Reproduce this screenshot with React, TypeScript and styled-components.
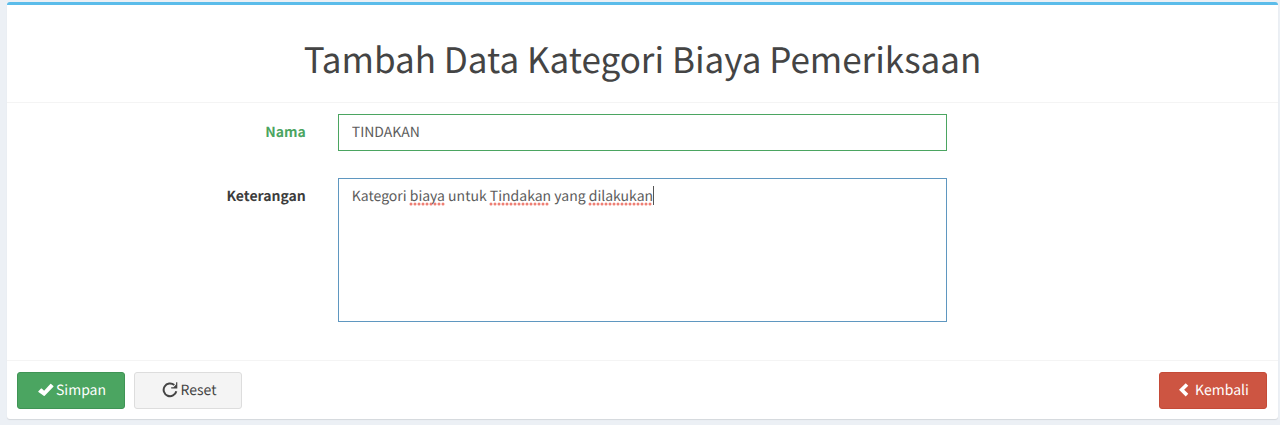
import React from "react";
import styled, { createGlobalStyle } from "styled-components";

const GlobalStyle = createGlobalStyle`
  *, *::before, *::after { box-sizing: border-box; }
  body {
    margin: 0;
    background: #ecf0f5;
    color: #444;
    font-family: "Source Sans Pro", "Noto Sans CJK SC", sans-serif;
    font-size: 14px;
    line-height: 20px;
    text-rendering: geometricPrecision;
  }
  button, input, textarea { font: inherit; text-rendering: inherit; }
`;

const Page = styled.main`
  padding: 2px 2px 6px 7px;
`;

const Card = styled.section`
  background: #fff;
  border-top: 3px solid #5bbcea;
  border-radius: 3px;
  box-shadow: 0 1px 1px rgba(0, 0, 0, 0.1);
`;

const CardHeader = styled.header`
  padding: 30px 12px 19px;
  border-bottom: 1px solid #f4f4f4;
  text-align: center;
`;

const Title = styled.h1`
  margin: 0;
  font-size: 35px;
  font-weight: 400;
  line-height: 48px;
`;

const Fields = styled.div`
  display: flex;
  flex-direction: column;
  gap: 27px;
  padding: 11px 0 38px;
`;

const FieldRow = styled.div`
  display: grid;
  grid-template-columns: 25% 50%;
`;

const Label = styled.label<{ $valid?: boolean }>`
  padding: 8px 19px 0 13px;
  text-align: right;
  font-weight: 700;
  color: ${(p) => (p.$valid ? "#4ba561" : "#3c3c3c")};
`;

const Control = styled.div`
  position: relative;
  display: flex;
  margin: 0 13px;
`;

const TextInput = styled.input`
  width: 100%;
  height: 37px;
  padding: 6px 13px 8px;
  border: 1px solid #4ba561;
  border-radius: 0;
  background: #fff;
  color: #5c5c5c;
  outline: none;
`;

const TextArea = styled.textarea`
  width: 100%;
  height: 144px;
  padding: 7px 13px;
  border: 1px solid #5f97c0;
  border-radius: 0;
  background: #fff;
  color: #5c5c5c;
  outline: none;
  resize: none;
`;

const SpellingMarks = styled.svg`
  position: absolute;
  top: 0;
  left: 0;
  pointer-events: none;
`;

const CardFooter = styled.footer`
  display: flex;
  justify-content: space-between;
  padding: 11px 11px 10px 10px;
  border-top: 1px solid #f4f4f4;
`;

const ButtonGroup = styled.div`
  display: flex;
  gap: 9px;
`;

const tones = {
  success: { background: "#4ba561", border: "#3f9455", text: "#fff" },
  neutral: { background: "#f4f4f4", border: "#ddd", text: "#444" },
  danger: { background: "#cd5542", border: "#c54a37", text: "#fff" },
};

const Button = styled.button<{ $tone: keyof typeof tones; $gap?: number }>`
  display: flex;
  align-items: center;
  justify-content: center;
  gap: ${(p) => p.$gap ?? 2}px;
  width: 108px;
  height: 37px;
  padding: 0 0 1px 2px;
  border: 1px solid ${(p) => tones[p.$tone].border};
  border-radius: 3px;
  background: ${(p) => tones[p.$tone].background};
  color: ${(p) => tones[p.$tone].text};
  cursor: pointer;
`;

const CheckIcon = () => (
  <svg width="16" height="14" viewBox="0 0 16 14" aria-hidden="true">
    <path d="M.4 8.2 3 5.6q.4-.4.8 0l2.3 2.200L12.300 1q.4-.4.8 0l2.300 2q.4.4 0 .8L6.700 12.700q-.5.5-1 0L.4 9Q0 8.600.4 8.200Z" fill="currentColor" />
  </svg>
);

const RefreshIcon = () => (
  <svg width="17" height="16" viewBox="0 0 17 16" aria-hidden="true">
    <path d="M14.300 9.200A6.400 6.400 0 1 1 12.300 3" fill="none" stroke="currentColor" strokeWidth="2" />
    <path d="M15.300.300V6.400H9.200v-1.200H11.500L14.100 2.400V.300Z" fill="currentColor" />
  </svg>
);

const ChevronIcon = () => (
  <svg width="10" height="14" viewBox="0 0 10 14" aria-hidden="true">
    <path d="M8 1.500 2.600 6.800 8 12.100" fill="none" stroke="currentColor" strokeWidth="3.600" />
  </svg>
);

const misspelled = [
  [73, 106],
  [153, 210],
  [252, 313],
];

export default function App() {
  return (
    <>
      <GlobalStyle />
      <Page>
        <Card>
          <CardHeader>
            <Title>Tambah Data Kategori Biaya Pemeriksaan</Title>
          </CardHeader>
          <form onSubmit={(event) => event.preventDefault()}>
            <Fields>
              <FieldRow>
                <Label htmlFor="nama" $valid>Nama</Label>
                <Control>
                  <TextInput id="nama" name="nama" defaultValue="TINDAKAN" />
                </Control>
              </FieldRow>
              <FieldRow>
                <Label htmlFor="keterangan">Keterangan</Label>
                <Control>
                  <TextArea
                    id="keterangan"
                    name="keterangan"
                    spellCheck={false}
                    defaultValue="Kategori biaya untuk Tindakan yang dilakukan"
                  />
                  <SpellingMarks width="320" height="36" aria-hidden="true">
                    {misspelled.map(([from, to]) => (
                      <line
                        key={from}
                        x1={from}
                        x2={to}
                        y1="26"
                        y2="26"
                        stroke="#ee7f74"
                        strokeWidth="3"
                        strokeLinecap="round"
                        strokeDasharray="0 4"
                      />
                    ))}
                    <path d="M315.500 8v19" stroke="#555" />
                  </SpellingMarks>
                </Control>
              </FieldRow>
            </Fields>
            <CardFooter>
              <ButtonGroup>
                <Button type="submit" $tone="success"><CheckIcon />Simpan</Button>
                <Button type="reset" $tone="neutral"><RefreshIcon />Reset</Button>
              </ButtonGroup>
              <Button type="button" $tone="danger" $gap={6}><ChevronIcon />Kembali</Button>
            </CardFooter>
          </form>
        </Card>
      </Page>
    </>
  );
}
